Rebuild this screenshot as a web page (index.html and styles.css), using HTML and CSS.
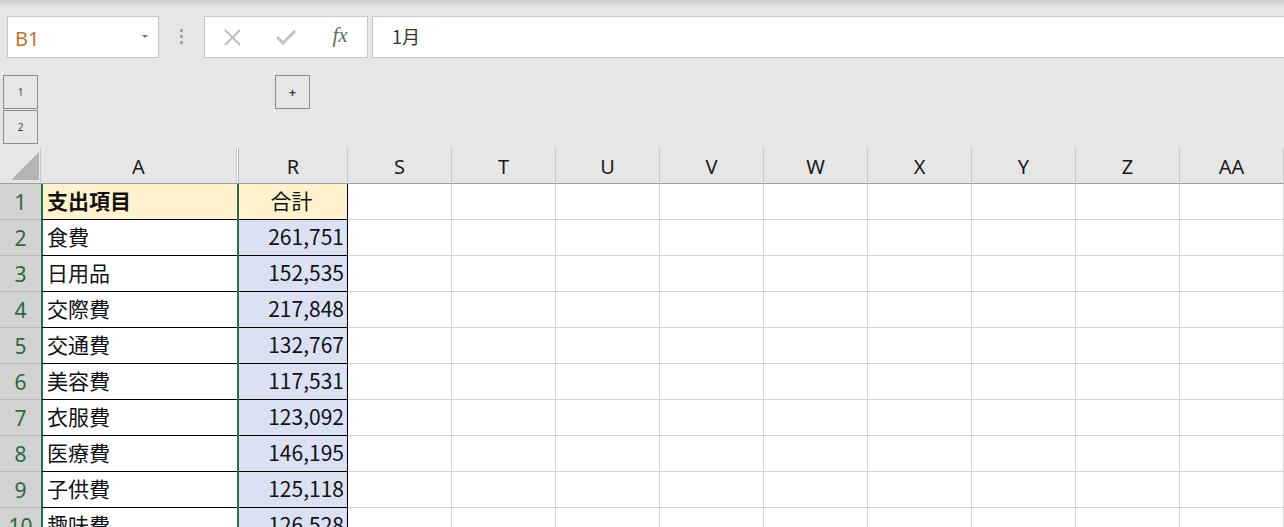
FILE: index.html
```html
<!DOCTYPE html>
<html lang="ja">
<head>
  <meta charset="UTF-8">
  <meta name="viewport" content="width=device-width, initial-scale=1.0">
  <title>支出集計</title>
  <link rel="stylesheet" href="styles.css">
</head>
<body>
  <div class="top-edge"></div>

  <div class="formula-row">
    <div class="name-box">
      <span>B1</span>
      <span class="caret"></span>
    </div>
    <div class="grip"><i></i><i></i><i></i></div>
    <div class="fx-buttons">
      <svg width="17" height="17" viewBox="0 0 17 17"><path d="M1 1 L16 16 M16 1 L1 16" stroke="#bdbdbd" stroke-width="1.8" fill="none"/></svg>
      <svg width="20" height="16" viewBox="0 0 20 16"><path d="M1 8 L7 14 L19 2" stroke="#c2c2c2" stroke-width="3" fill="none"/></svg>
      <span class="fx">fx</span>
    </div>
    <div class="formula-input">1月</div>
  </div>

  <div class="outline">
    <div class="levels">
      <button>1</button>
      <button>2</button>
    </div>
    <button class="expand">+</button>
  </div>

  <div class="sheet" id="sheet">
    <div class="corner"></div>
    <div class="col-head">A</div>
    <div class="col-head hidden-mark"></div>
    <div class="col-head">R</div>
    <div class="col-head">S</div>
    <div class="col-head">T</div>
    <div class="col-head">U</div>
    <div class="col-head">V</div>
    <div class="col-head">W</div>
    <div class="col-head">X</div>
    <div class="col-head">Y</div>
    <div class="col-head">Z</div>
    <div class="col-head">AA</div>
  </div>

  <script>
    const rows = [
      ['食費', '261,751'],
      ['日用品', '152,535'],
      ['交際費', '217,848'],
      ['交通費', '132,767'],
      ['美容費', '117,531'],
      ['衣服費', '123,092'],
      ['医療費', '146,195'],
      ['子供費', '125,118'],
      ['趣味費', '126,528']
    ];
    const sheet = document.querySelector('#sheet');

    function addRow(num, label, total, isHead) {
      let html = `<div class="row-head">${num}</div>`;
      html += `<div class="cell item${isHead ? ' head' : ''}">${label}</div>`;
      html += `<div class="sel-line"></div>`;
      html += `<div class="cell total${isHead ? ' head' : ''}">${total}</div>`;
      for (let i = 0; i < 9; i++) {
        html += `<div class="cell"></div>`;
      }
      sheet.insertAdjacentHTML('beforeend', html);
    }

    addRow(1, '支出項目', '合計', true);
    rows.forEach((r, i) => addRow(i + 2, r[0], r[1], false));
  </script>
</body>
</html>
```

FILE: styles.css
```css
body {
  margin: 0;
  background-color: #e6e6e6;
  font-family: "Noto Sans CJK JP", sans-serif;
  overflow: hidden;
}
.top-edge {
  height: 3px;
  background-color: #d3d3d3;
  border-bottom: 3px solid #dcdcdc;
}
.formula-row {
  display: flex;
  margin-top: 10px;
  padding-left: 7px;
  height: 42px;
}
.name-box {
  box-sizing: border-box;
  width: 152px;
  background-color: white;
  border: 1px solid #c6c6c6;
  display: flex;
  align-items: center;
  justify-content: space-between;
  padding: 2px 10px 0 7px;
  color: #c5701f;
  font-family: "Noto Sans", sans-serif;
  font-size: 20px;
}
.caret {
  width: 0;
  height: 0;
  border-left: 3px solid transparent;
  border-right: 3px solid transparent;
  border-top: 3px solid #707070;
  margin-bottom: 4px;
}
.grip {
  width: 45px;
  display: flex;
  flex-direction: column;
  align-items: center;
  justify-content: center;
  gap: 3px;
  padding-bottom: 2px;
}
.grip i {
  width: 3px;
  height: 3px;
  background-color: #a8a8a8;
}
.fx-buttons {
  box-sizing: border-box;
  width: 164px;
  background-color: white;
  border: 1px solid #c6c6c6;
  display: grid;
  grid-template-columns: repeat(3, 54px);
  justify-items: center;
  align-items: center;
}
.fx {
  font-family: "Liberation Serif", serif;
  font-style: italic;
  font-size: 21px;
  color: #666;
  margin-bottom: 3px;
}
.formula-input {
  flex: 1;
  margin-left: 4px;
  margin-right: -1px;
  background-color: white;
  border: 1px solid #c6c6c6;
  padding: 6px 0 0 19px;
  font-size: 18px;
  color: #333;
}
.outline {
  display: flex;
  align-items: flex-start;
  height: 90px;
  box-sizing: border-box;
  padding: 17px 0 0 3px;
}
.levels {
  display: flex;
  flex-direction: column;
  gap: 1px;
}
.outline button {
  box-sizing: border-box;
  width: 35px;
  height: 34px;
  background-color: #e6e6e6;
  border: 1px solid #8c8c8c;
  color: #4a3a4a;
  font-family: "Noto Sans", sans-serif;
  font-size: 10px;
  padding: 0;
}
.outline .expand {
  margin-left: 237px;
  font-size: 13px;
  font-weight: bold;
}
.sheet {
  display: grid;
  grid-template-columns: 41px 196px 2px 109px repeat(9, 104px);
  grid-auto-rows: 36px;
}
.sheet > div {
  box-sizing: border-box;
  display: flex;
  align-items: center;
}
.corner {
  position: relative;
  border-right: 1px solid #c9c9c9;
  border-bottom: 1px solid #9e9e9e;
}
.corner::after {
  content: '';
  position: absolute;
  right: 1px;
  bottom: 3px;
  width: 28px;
  height: 28px;
  background-color: #b4b4b4;
  clip-path: polygon(100% 0, 100% 100%, 0 100%);
}
.col-head {
  justify-content: center;
  border-right: 1px solid #c9c9c9;
  border-bottom: 1px solid #9e9e9e;
  font-family: "Noto Sans", sans-serif;
  font-size: 20px;
  color: #1a1a1a;
  padding-top: 1px;
}
.col-head.hidden-mark {
  border-right: none;
  background: linear-gradient(to right, #ffffff 1px, #b8b8b8 1px);
}
.row-head {
  justify-content: center;
  background-color: #d2d2d2;
  border-bottom: 1px solid #bdbdbd;
  color: #2a6a44;
  font-family: "Noto Sans", sans-serif;
  font-size: 21px;
}
.cell {
  background-color: white;
  border-right: 1px solid #d4d4d4;
  border-bottom: 1px solid #d4d4d4;
  font-size: 21px;
  color: #111;
  padding-bottom: 4px;
}
.cell.item {
  border-left: 2px solid #217346;
  border-right: none;
  border-bottom-color: #000;
  padding-left: 4px;
}
.cell.total {
  justify-content: flex-end;
  background-color: #d9e1f2;
  border-right-color: #000;
  border-bottom-color: #000;
  padding-right: 3px;
}
.cell.head {
  background-color: #fff2cc;
}
.cell.item.head {
  font-weight: bold;
}
.cell.total.head {
  justify-content: center;
}
.sel-line {
  background-color: #217346;
}
```
